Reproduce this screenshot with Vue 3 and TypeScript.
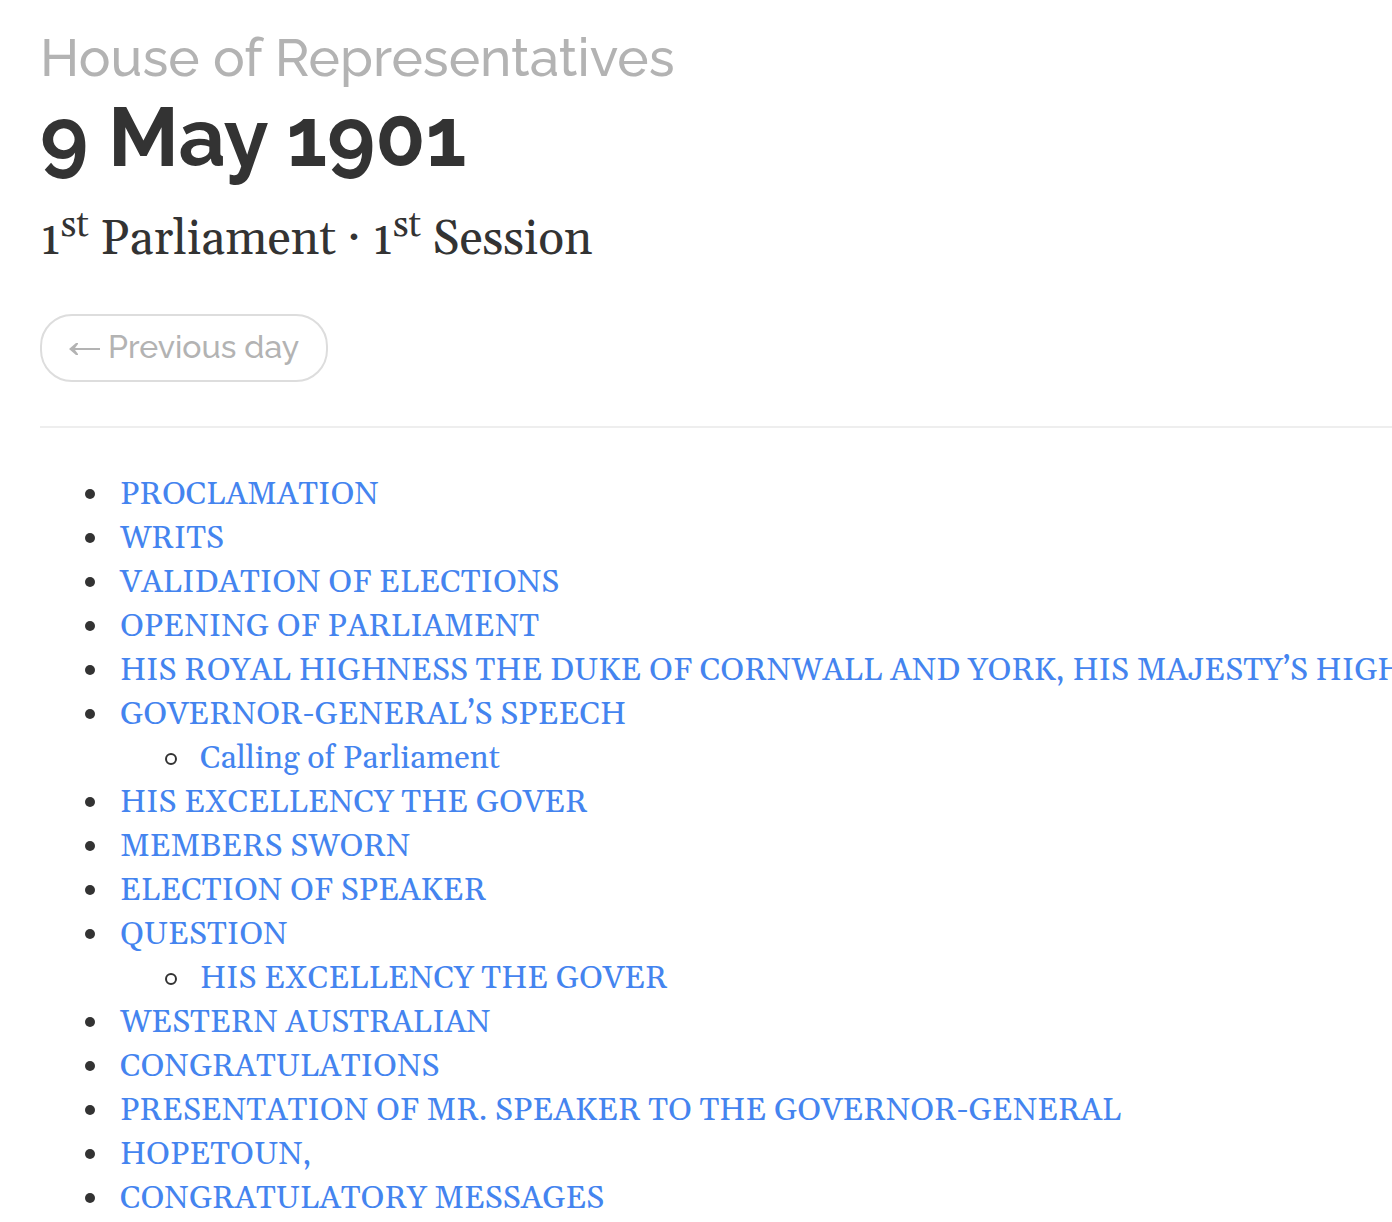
<script setup lang="ts">
interface Topic {
  title: string
  children?: Topic[]
}

const topics: Topic[] = [
  { title: 'PROCLAMATION' },
  { title: 'WRITS' },
  { title: 'VALIDATION OF ELECTIONS' },
  { title: 'OPENING OF PARLIAMENT' },
  { title: 'HIS ROYAL HIGHNESS THE DUKE OF CORNWALL AND YORK, HIS MAJESTY’S HIGH' },
  { title: 'GOVERNOR-GENERAL’S SPEECH', children: [{ title: 'Calling of Parliament' }] },
  { title: 'HIS EXCELLENCY THE GOVER' },
  { title: 'MEMBERS SWORN' },
  { title: 'ELECTION OF SPEAKER' },
  { title: 'QUESTION', children: [{ title: 'HIS EXCELLENCY THE GOVER' }] },
  { title: 'WESTERN AUSTRALIAN' },
  { title: 'CONGRATULATIONS' },
  { title: 'PRESENTATION OF MR. SPEAKER TO THE GOVERNOR-GENERAL' },
  { title: 'HOPETOUN,' },
  { title: 'CONGRATULATORY MESSAGES' },
]
</script>

<template>
  <main class="page">
    <header class="heading">
      <h1>
        <span class="house">House of Representatives</span>
        <span class="date">9 May 1901</span>
      </h1>
      <p class="session">1<sup>st</sup> Parliament · 1<sup>st</sup> Session</p>
      <a class="previous" href="#">
        <svg class="arrow" viewBox="0 0 31 14" aria-hidden="true">
          <path d="M0 7 L7 1 H9 V2 L6 6 H31 V8 H6 L9 12 V13 H7 Z" fill="currentColor" />
        </svg>
        <span>Previous day</span>
      </a>
    </header>
    <hr />
    <ul class="topics">
      <li v-for="topic in topics" :key="topic.title">
        <a href="#">{{ topic.title }}</a>
        <ul v-if="topic.children" class="subtopics">
          <li v-for="child in topic.children" :key="child.title">
            <a href="#">{{ child.title }}</a>
          </li>
        </ul>
      </li>
    </ul>
  </main>
</template>

<style>
body {
  margin: 0;
  background: #fff;
}
</style>

<style scoped>
.page {
  padding: 24px 0 0 40px;
  overflow: hidden;
  color: #333;
  font-family: Georgia, Gelasio, "Liberation Serif", serif;
}

h1 {
  margin: 0;
  font-family: Raleway, Lato, sans-serif;
  font-variant-numeric: oldstyle-nums;
}

.house,
.date {
  display: block;
}

.house {
  color: #b3b3b3;
  font-size: 53px;
  font-weight: 500;
  line-height: 66px;
}

.date {
  font-size: 82px;
  font-weight: 700;
  line-height: 94px;
}

.session {
  margin: 23px 0 0;
  font-size: 48px;
  line-height: 66px;
}

sup {
  font-size: 36px;
  line-height: 0;
  vertical-align: baseline;
  position: relative;
  top: -18px;
}

.previous {
  display: inline-flex;
  align-items: center;
  gap: 8px;
  box-sizing: border-box;
  height: 68px;
  margin-top: 41px;
  padding: 2px 27px 0;
  border: 2px solid #ddd;
  border-radius: 32px;
  color: #b3b3b3;
  font-family: Raleway, Lato, sans-serif;
  font-size: 32px;
  font-weight: 500;
  line-height: 58px;
  text-decoration: none;
}

.previous span {
  padding-bottom: 4px;
}

.arrow {
  width: 31px;
  height: 14px;
}

hr {
  height: 2px;
  margin: 44px 0 45px;
  border: 0;
  background: #eee;
}

.topics {
  margin: 0;
  padding-left: 72px;
  font-size: 32px;
  line-height: 44px;
  white-space: nowrap;
}

.topics > li {
  padding-left: 8px;
}

.subtopics {
  margin: 0;
  padding-left: 45px;
  list-style: none;
}

.subtopics li {
  display: flex;
  align-items: center;
  gap: 23px;
}

.subtopics li::before {
  content: "";
  box-sizing: border-box;
  width: 12px;
  height: 12px;
  border: 2px solid #333;
  border-radius: 50%;
}

.topics a {
  color: #4484ef;
  text-decoration: none;
}
</style>
